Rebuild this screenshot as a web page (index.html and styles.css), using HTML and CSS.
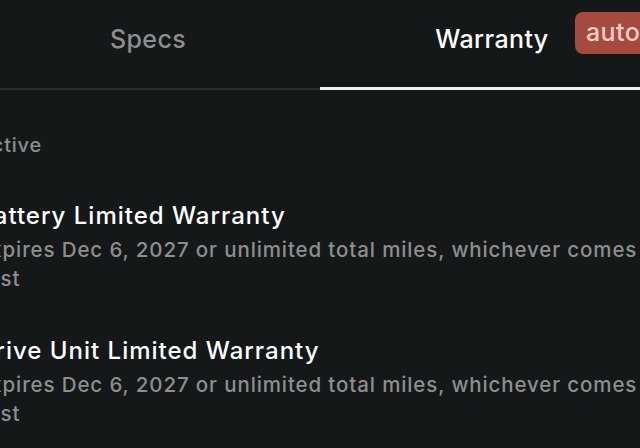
FILE: index.html
```html
<!DOCTYPE html>
<html>
<head>
    <title>Warranty</title>
    <link rel="stylesheet" href="styles.css">
</head>

<body>
    <div class="screen">
        <div class="tabs">
            <div class="tab">Specs</div>
            <div class="tab active">Warranty</div>
        </div>

        <div class="warranty">
            <div class="status">Active</div>

            <div class="item">
                <div class="item-title">Battery Limited Warranty</div>
                <div class="item-text">Expires Dec 6, 2027 or unlimited total miles, whichever comes first</div>
            </div>

            <div class="item">
                <div class="item-title">Drive Unit Limited Warranty</div>
                <div class="item-text">Expires Dec 6, 2027 or unlimited total miles, whichever comes first</div>
            </div>
        </div>
    </div>

    <div class="badge">auto</div>
</body>
</html>
```

FILE: styles.css
```css
body {
    margin: 0;
    background: #151819;
    font-family: 'Inter', 'Liberation Sans', sans-serif;
    color: #fff;
    overflow: hidden;
    height: 448px;
}

.screen {
    margin-left: -24px;
    width: 688px;
}

/* tab bar */
.tabs {
    display: flex;
    border-bottom: 2px solid #2c2f31;
}

.tab {
    flex: 1;
    text-align: center;
    font-size: 25px;
    font-weight: 500;
    letter-spacing: 0.4px;
    color: #8e8e8e;
    padding: 24px 0 34px;
    line-height: 30px;
}

.tab.active {
    color: #fff;
    border-bottom: 3px solid #f2f2f2;
    margin-bottom: -2px;
    padding-bottom: 33px;
}

/* warranty list */
.warranty {
    padding: 41px 0 0 1px;
    width: 693px;
}

.status {
    font-size: 20px;
    font-weight: 500;
    letter-spacing: 0.8px;
    color: #8e8e8e;
    line-height: 28px;
}

.item {
    margin-top: 41px;
}

.item + .item {
    margin-top: 42px;
}

.item-title {
    font-size: 24px;
    font-weight: 500;
    letter-spacing: 1px;
    line-height: 32px;
}

.item-text {
    font-size: 20.5px;
    font-weight: 500;
    letter-spacing: 0.88px;
    color: #8e8e8e;
    line-height: 29px;
    margin-top: 3px;
}

.badge {
    position: absolute;
    left: 575px;
    top: 12px;
    background: #a54a3f;
    color: #f3cdc5;
    font-size: 25px;
    font-weight: 500;
    letter-spacing: 0.4px;
    padding: 4px 20px 6px 11px;
    border-radius: 8px;
    line-height: 32px;
}
```
